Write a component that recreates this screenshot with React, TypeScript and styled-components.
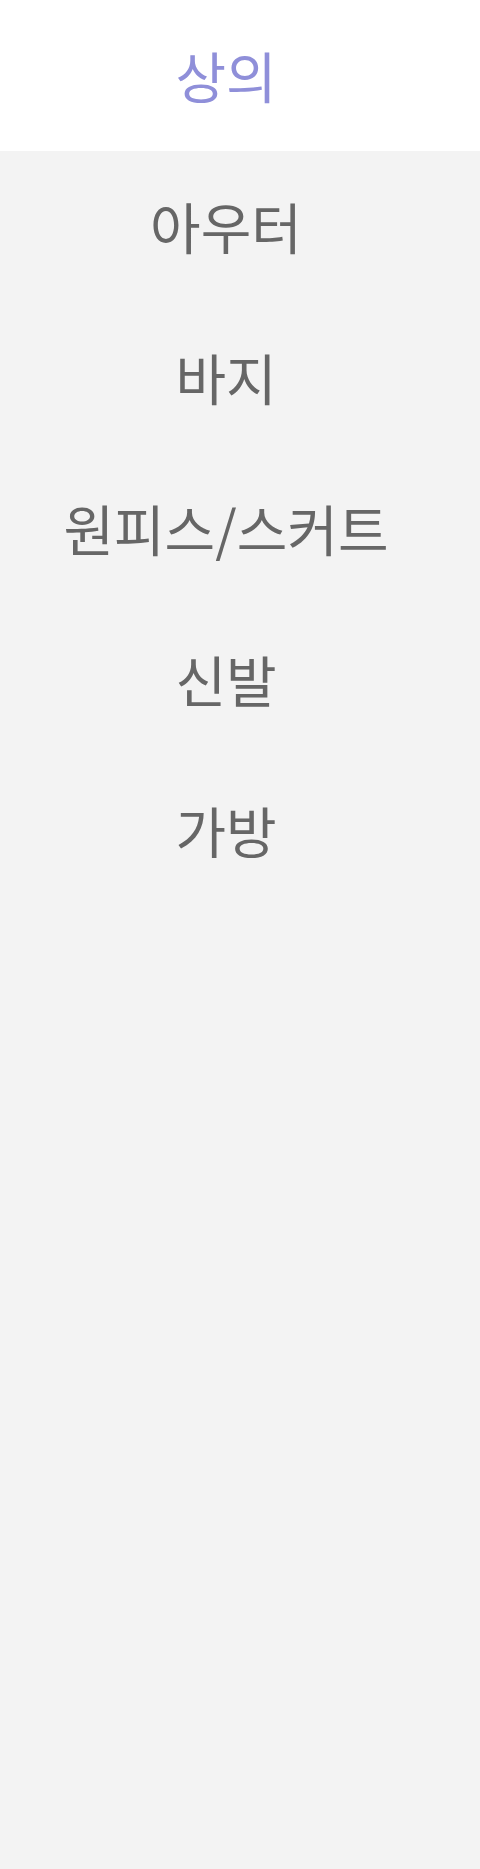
import { createGlobalStyle } from 'styled-components'
import styled from 'styled-components'

const GlobalStyle = createGlobalStyle`
  html, body {
    margin: 0;
    padding: 0;
    background: #f3f3f3;
  }
  body {
    font-family: 'Noto Sans', 'Noto Sans CJK KR', sans-serif;
  }
`

const Menu = styled.ul`
  list-style: none;
  margin: 0;
  padding: 0;
  width: 480px;
  min-height: 1869px;
  background: #f3f3f3;
`

const Item = styled.li<{ $active?: boolean }>`
  height: 151px;
  display: flex;
  align-items: center;
  justify-content: center;
  padding-right: 28px;
  padding-bottom: 2px;
  box-sizing: border-box;
  background: ${({ $active }) => ($active ? '#ffffff' : 'transparent')};
  color: ${({ $active }) => ($active ? '#8f8fd9' : '#666666')};
  font-family: 'Noto Sans CJK KR', 'Noto Sans', sans-serif;
  font-size: 55px;
  line-height: 1;
  cursor: pointer;
`

const categories = ['상의', '아우터', '바지', '원피스/스커트', '신발', '가방']

const App = () => {
  return (
    <>
      <GlobalStyle />
      <Menu>
        {categories.map((name, i) => (
          <Item key={name} $active={i === 0}>
            {name}
          </Item>
        ))}
      </Menu>
    </>
  )
}

export default App
